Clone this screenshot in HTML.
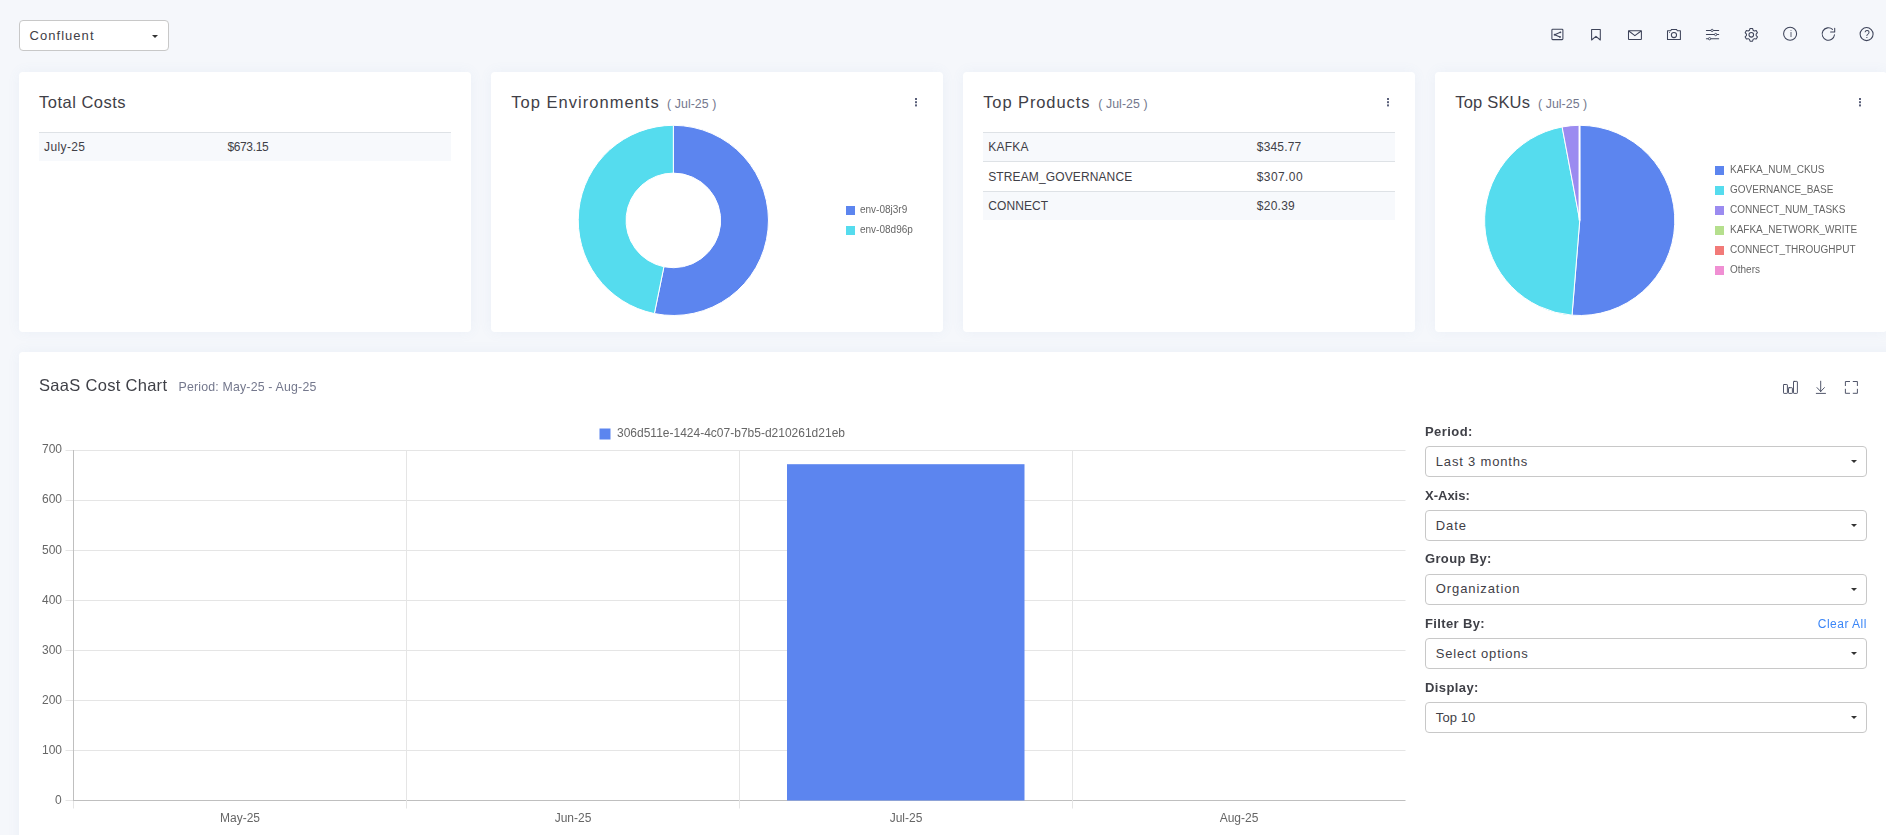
<!DOCTYPE html>
<html lang="en"><head><meta charset="utf-8"><title>Confluent SaaS Costs</title>
<style>
html,body{margin:0;padding:0}
body{width:1886px;height:835px;overflow:hidden;background:#f5f7fb;font-family:"Liberation Sans", sans-serif;position:relative}
.t{position:absolute;white-space:pre;line-height:20px;font-family:"Liberation Sans", sans-serif}
.cv{will-change:transform}
.card{position:absolute;background:#fff;border-radius:4px;box-shadow:0 0 13px 0 rgba(100,140,200,.07)}
.sel{position:absolute;box-sizing:border-box;background:#fff;border:1px solid #c8c8c8;border-radius:4px}
.caret{position:absolute;width:0;height:0;border-left:3.5px solid transparent;border-right:3.5px solid transparent;border-top:3.5px solid #333}
.row{position:absolute;box-sizing:border-box;border-top:1px solid #dee2e6}
.odd{background:#f7f9fc}
.lg{position:absolute;width:9px;height:9px}
svg{position:absolute;left:0;top:0;overflow:visible}
.ic2{stroke-width:.9 !important}
.ic{fill:none;stroke:#3e445a;stroke-width:1.05;stroke-linecap:round;stroke-linejoin:round}
</style></head><body>

<div class="sel" style="left:19px;top:20px;width:150px;height:31px"></div>
<span class="t" style="left:29.50px;top:26.00px;font-size:13px;color:#3f4047;letter-spacing:1.043px;">Confluent</span>
<div class="caret" style="left:151.5px;top:35px"></div>
<div class="card" style="left:19px;top:72px;width:452px;height:260px"></div>
<div class="card" style="left:491px;top:72px;width:452px;height:260px"></div>
<div class="card" style="left:963px;top:72px;width:452px;height:260px"></div>
<div class="card" style="left:1435px;top:72px;width:452px;height:260px"></div>
<div class="card" style="left:19px;top:352px;width:1900px;height:520px"></div>
<span class="t" style="left:39.00px;top:92.00px;font-size:16.5px;color:#3f4047;letter-spacing:0.497px;">Total Costs</span>
<div class="row odd" style="left:39px;top:132px;width:412px;height:29.3px"></div>
<span class="t" style="left:44.00px;top:137.00px;font-size:12px;color:#3f4047;letter-spacing:0.385px;">July-25</span>
<span class="t" style="left:227.40px;top:137.00px;font-size:12px;color:#3f4047;letter-spacing:-0.348px;">$673.15</span>
<span class="t" style="left:511.20px;top:92.00px;font-size:16.5px;color:#3f4047;letter-spacing:1.028px;">Top Environments</span>
<span class="t" style="left:667.10px;top:94.00px;font-size:12.35px;color:#74788d;letter-spacing:0.055px;">( Jul-25 )</span>
<span class="t" style="left:983.20px;top:92.00px;font-size:16.5px;color:#3f4047;letter-spacing:0.899px;">Top Products</span>
<span class="t" style="left:1098.30px;top:94.00px;font-size:12.35px;color:#74788d;letter-spacing:0.055px;">( Jul-25 )</span>
<div class="row odd" style="left:983px;top:132.0px;width:412px;height:29.4px"></div>
<span class="t" style="left:988.20px;top:137.00px;font-size:12px;color:#3f4047;letter-spacing:0.235px;">KAFKA</span>
<span class="t" style="left:1256.80px;top:137.00px;font-size:12px;color:#3f4047;letter-spacing:0.168px;">$345.77</span>
<div class="row" style="left:983px;top:161.4px;width:412px;height:29.4px"></div>
<span class="t" style="left:988.20px;top:167.00px;font-size:12px;color:#3f4047;letter-spacing:0.123px;">STREAM_GOVERNANCE</span>
<span class="t" style="left:1256.80px;top:167.00px;font-size:12px;color:#3f4047;letter-spacing:0.402px;">$307.00</span>
<div class="row odd" style="left:983px;top:190.8px;width:412px;height:29.4px"></div>
<span class="t" style="left:988.20px;top:196.00px;font-size:12px;color:#3f4047;letter-spacing:0.109px;">CONNECT</span>
<span class="t" style="left:1256.80px;top:196.00px;font-size:12px;color:#3f4047;letter-spacing:0.259px;">$20.39</span>
<span class="t" style="left:1455.20px;top:92.00px;font-size:16.5px;color:#3f4047;letter-spacing:0.204px;">Top SKUs</span>
<span class="t" style="left:1538.00px;top:94.00px;font-size:12.35px;color:#74788d;letter-spacing:0.055px;">( Jul-25 )</span>
<div style="position:absolute;left:915.2px;top:98.1px;width:1.5px;height:1.6px;background:#5a607a;box-shadow:0 3.2px 0 #5a607a,0 6.4px 0 #5a607a"></div>
<div style="position:absolute;left:1387.2px;top:98.1px;width:1.5px;height:1.6px;background:#5a607a;box-shadow:0 3.2px 0 #5a607a,0 6.4px 0 #5a607a"></div>
<div style="position:absolute;left:1859.2px;top:98.1px;width:1.5px;height:1.6px;background:#5a607a;box-shadow:0 3.2px 0 #5a607a,0 6.4px 0 #5a607a"></div>
<span class="t cv" style="left:1690.50px;width:200px;text-align:center;top:24.00px;font-size:9px;color:#3a4056;">i</span>
<span class="t cv" style="left:1766.60px;width:200px;text-align:center;top:25.00px;font-size:10px;color:#3a4056;">?</span>
<svg width="1886" height="835" viewBox="0 0 1886 835">
<path d="M673.35 125.30A95.1 95.1 0 1 1 654.39 313.59L663.92 266.75A47.3 47.3 0 1 0 673.35 173.10Z" fill="#5c85ef" stroke="#fff" stroke-width="1"/>
<path d="M654.39 313.59A95.1 95.1 0 0 1 673.35 125.30L673.35 173.10A47.3 47.3 0 0 0 663.92 266.75Z" fill="#55dcee" stroke="#fff" stroke-width="1"/>
<path d="M1579.75 220.40L1579.75 125.30A95.1 95.1 0 1 1 1572.02 315.19Z" fill="#5c85ef" stroke="#fff" stroke-width="1"/>
<path d="M1579.75 220.40L1572.02 315.19A95.1 95.1 0 0 1 1562.14 126.94Z" fill="#55dcee" stroke="#fff" stroke-width="1"/>
<path d="M1579.75 220.40L1562.14 126.94A95.1 95.1 0 0 1 1579.58 125.30Z" fill="#9b8bf0" stroke="#fff" stroke-width="1"/>
<path d="M1579.45 220.4V125.30000000000001" stroke="#fff" stroke-width="1.8"/>
<path d="M65.5 450.5H1405.5" stroke="#e5e5e5" stroke-width="1"/>
<path d="M65.5 500.5H1405.5" stroke="#e5e5e5" stroke-width="1"/>
<path d="M65.5 550.5H1405.5" stroke="#e5e5e5" stroke-width="1"/>
<path d="M65.5 600.5H1405.5" stroke="#e5e5e5" stroke-width="1"/>
<path d="M65.5 650.5H1405.5" stroke="#e5e5e5" stroke-width="1"/>
<path d="M65.5 700.5H1405.5" stroke="#e5e5e5" stroke-width="1"/>
<path d="M65.5 750.5H1405.5" stroke="#e5e5e5" stroke-width="1"/>
<path d="M65.5 800.5H73.5" stroke="#e5e5e5" stroke-width="1"/>
<path d="M73.5 800.5H1405.5" stroke="#bfbfbf" stroke-width="1"/>
<path d="M73.5 450V801" stroke="#bfbfbf" stroke-width="1"/>
<path d="M73.5 801V808.5" stroke="#e5e5e5" stroke-width="1"/>
<path d="M406.5 450.5V808.5" stroke="#e5e5e5" stroke-width="1"/>
<path d="M739.5 450.5V808.5" stroke="#e5e5e5" stroke-width="1"/>
<path d="M1072.5 450.5V808.5" stroke="#e5e5e5" stroke-width="1"/>
<rect x="787" y="464.2" width="237.5" height="336.3" fill="#5c85ef"/>
<rect x="599.5" y="428.5" width="11" height="11" fill="#5c85ef"/>
<rect class="ic" x="1551.9" y="29.3" width="11" height="10.3" rx="0.8"/>
<path class="ic" d="M1560.4 32.3L1554.6 34.7L1560 36.9"/>
<circle cx="1560.4" cy="32.3" r="0.9" fill="#434960"/>
<circle cx="1554.6" cy="34.7" r="0.9" fill="#434960"/>
<circle cx="1560" cy="36.9" r="0.9" fill="#434960"/>
<path class="ic" d="M1591.6 40V29.5H1600.3V40L1595.95 36.3Z"/>
<rect class="ic" x="1628.5" y="30.7" width="12.9" height="8.7" rx="0.5"/>
<path class="ic" d="M1628.8 31L1634.9 35.7L1641.1 31"/>
<path class="ic" d="M1667.5 30.7H1670.6L1671.6 29.4H1676.4L1677.4 30.7H1680.4V39.4H1667.5Z"/>
<circle class="ic" cx="1673.95" cy="35" r="2.6"/>
<circle cx="1669.5" cy="32.4" r="0.5" fill="#434960"/>
<path class="ic" d="M1706.4 30.4H1718.7"/>
<circle cx="1712.1" cy="30.4" r="1.15" fill="#f5f7fb" stroke="#434960" stroke-width="0.9"/>
<path class="ic" d="M1706.4 34.55H1718.7"/>
<circle cx="1715.7" cy="34.55" r="1.15" fill="#f5f7fb" stroke="#434960" stroke-width="0.9"/>
<path class="ic" d="M1706.4 38.7H1718.7"/>
<circle cx="1709.6" cy="38.7" r="1.15" fill="#f5f7fb" stroke="#434960" stroke-width="0.9"/>
<path class="ic" d="M1749.46 30.26L1750.06 28.42L1752.54 28.42L1753.14 30.26L1754.32 30.94L1756.21 30.54L1757.45 32.68L1756.15 34.12L1756.15 35.48L1757.45 36.92L1756.21 39.06L1754.32 38.66L1753.14 39.34L1752.54 41.18L1750.06 41.18L1749.46 39.34L1748.28 38.66L1746.39 39.06L1745.15 36.92L1746.45 35.48L1746.45 34.12L1745.15 32.68L1746.39 30.54L1748.28 30.94Z"/>
<circle class="ic" cx="1751.3" cy="34.8" r="2.3"/>
<circle class="ic" cx="1790.1" cy="33.7" r="6.5"/>
<path class="ic" d="M1834.5 34.7A6.2 6.2 0 1 1 1832.5 29.4"/>
<path class="ic" d="M1834.7 28.3V32H1830.6"/>
<circle class="ic" cx="1866.6" cy="34.1" r="6.5"/>
<rect class="ic ic2" x="1783.5" y="384.5" width="3.9" height="8.9" rx="0.6"/>
<rect class="ic ic2" x="1788.5" y="387.7" width="3.9" height="5.7" rx="0.6"/>
<rect class="ic ic2" x="1793.5" y="381.4" width="3.9" height="12" rx="0.6"/>
<path class="ic ic2" d="M1820.7 381.2V391.5M1817 387.6L1820.7 391.5L1824.4 387.6M1816.3 393.4H1825.5"/>
<path class="ic ic2" d="M1845.4 385.6V381.5H1849.6M1853.2 381.5H1857.4V385.6M1845.4 389.2V393.3H1849.6M1853.2 393.3H1857.4V389.2"/>
</svg>
<div class="lg" style="left:846px;top:206px;background:#5c85ef"></div>
<span class="t cv" style="left:860.30px;top:200.00px;font-size:10px;color:#666;">env-08j3r9</span>
<div class="lg" style="left:846px;top:226px;background:#55dcee"></div>
<span class="t cv" style="left:860.30px;top:220.00px;font-size:10px;color:#666;">env-08d96p</span>
<div class="lg" style="left:1715px;top:166px;background:#5c85ef"></div>
<span class="t cv" style="left:1729.90px;top:160.00px;font-size:10px;color:#666;">KAFKA_NUM_CKUS</span>
<div class="lg" style="left:1715px;top:186px;background:#55dcee"></div>
<span class="t cv" style="left:1729.90px;top:180.00px;font-size:10px;color:#666;">GOVERNANCE_BASE</span>
<div class="lg" style="left:1715px;top:206px;background:#9b8bf0"></div>
<span class="t cv" style="left:1729.90px;top:200.00px;font-size:10px;color:#666;">CONNECT_NUM_TASKS</span>
<div class="lg" style="left:1715px;top:226px;background:#b5df8d"></div>
<span class="t cv" style="left:1729.90px;top:220.00px;font-size:10px;color:#666;">KAFKA_NETWORK_WRITE</span>
<div class="lg" style="left:1715px;top:246px;background:#f27a78"></div>
<span class="t cv" style="left:1729.90px;top:240.00px;font-size:10px;color:#666;">CONNECT_THROUGHPUT</span>
<div class="lg" style="left:1715px;top:266px;background:#f08fd3"></div>
<span class="t cv" style="left:1729.90px;top:260.00px;font-size:10px;color:#666;">Others</span>
<span class="t" style="left:39.00px;top:375.00px;font-size:16.5px;color:#3f4047;letter-spacing:0.299px;">SaaS Cost Chart</span>
<span class="t" style="left:178.50px;top:377.00px;font-size:12.35px;color:#74788d;letter-spacing:0.182px;">Period: May-25 - Aug-25</span>
<span class="t cv" style="left:617.20px;top:423.00px;font-size:12px;color:#666;">306d511e-1424-4c07-b7b5-d210261d21eb</span>
<span class="t cv" style="right:1823.90px;top:439.00px;font-size:12px;color:#666;">700</span>
<span class="t cv" style="right:1823.90px;top:489.00px;font-size:12px;color:#666;">600</span>
<span class="t cv" style="right:1823.90px;top:540.00px;font-size:12px;color:#666;">500</span>
<span class="t cv" style="right:1823.90px;top:590.00px;font-size:12px;color:#666;">400</span>
<span class="t cv" style="right:1823.90px;top:640.00px;font-size:12px;color:#666;">300</span>
<span class="t cv" style="right:1823.90px;top:690.00px;font-size:12px;color:#666;">200</span>
<span class="t cv" style="right:1823.90px;top:740.00px;font-size:12px;color:#666;">100</span>
<span class="t cv" style="right:1823.90px;top:790.00px;font-size:12px;color:#666;">0</span>
<span class="t cv" style="left:140.00px;width:200px;text-align:center;top:808.00px;font-size:12px;color:#666;">May-25</span>
<span class="t cv" style="left:473.00px;width:200px;text-align:center;top:808.00px;font-size:12px;color:#666;">Jun-25</span>
<span class="t cv" style="left:806.00px;width:200px;text-align:center;top:808.00px;font-size:12px;color:#666;">Jul-25</span>
<span class="t cv" style="left:1139.00px;width:200px;text-align:center;top:808.00px;font-size:12px;color:#666;">Aug-25</span>
<span class="t" style="left:1425.00px;top:422.00px;font-size:13px;color:#3f4047;letter-spacing:0.434px;font-weight:700;">Period:</span>
<div class="sel" style="left:1425px;top:446px;width:442px;height:31px"></div>
<span class="t" style="left:1435.80px;top:452.00px;font-size:13px;color:#3f4047;letter-spacing:0.812px;">Last 3 months</span>
<div class="caret" style="left:1850.6px;top:459.6px"></div>
<span class="t" style="left:1425.00px;top:486.00px;font-size:13px;color:#3f4047;font-weight:700;">X-Axis:</span>
<div class="sel" style="left:1425px;top:510px;width:442px;height:31px"></div>
<span class="t" style="left:1435.80px;top:516.00px;font-size:13px;color:#3f4047;letter-spacing:0.910px;">Date</span>
<div class="caret" style="left:1850.6px;top:523.6px"></div>
<span class="t" style="left:1425.00px;top:549.00px;font-size:13px;color:#3f4047;letter-spacing:0.342px;font-weight:700;">Group By:</span>
<div class="sel" style="left:1425px;top:574px;width:442px;height:31px"></div>
<span class="t" style="left:1435.80px;top:579.00px;font-size:13px;color:#3f4047;letter-spacing:0.916px;">Organization</span>
<div class="caret" style="left:1850.6px;top:587.6px"></div>
<span class="t" style="left:1425.00px;top:614.00px;font-size:13px;color:#3f4047;letter-spacing:0.362px;font-weight:700;">Filter By:</span>
<div class="sel" style="left:1425px;top:638px;width:442px;height:31px"></div>
<span class="t" style="left:1435.80px;top:644.00px;font-size:13px;color:#3f4047;letter-spacing:0.794px;">Select options</span>
<div class="caret" style="left:1850.6px;top:651.6px"></div>
<span class="t" style="left:1425.00px;top:678.00px;font-size:13px;color:#3f4047;letter-spacing:0.403px;font-weight:700;">Display:</span>
<div class="sel" style="left:1425px;top:702px;width:442px;height:31px"></div>
<span class="t" style="left:1435.80px;top:708.00px;font-size:13px;color:#3f4047;letter-spacing:0.091px;">Top 10</span>
<div class="caret" style="left:1850.6px;top:715.6px"></div>
<span class="t" style="left:1817.80px;top:614.00px;font-size:12px;color:#3b86f7;letter-spacing:0.489px;">Clear All</span>
</body></html>
